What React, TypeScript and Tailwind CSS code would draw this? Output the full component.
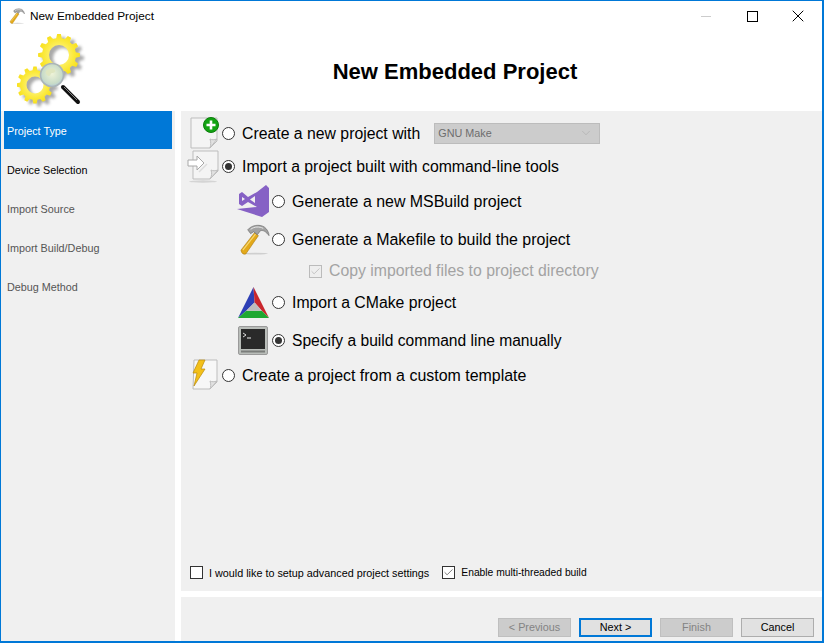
import { Check, ChevronDown, X } from "lucide-react";
import type { ReactNode } from "react";

const sansFont = { fontFamily: '"Liberation Sans", Arial, sans-serif' };

function gearPath(cx: number, cy: number, rIn: number, rOut: number, teeth: number, hole: number) {
  let d = "";
  const step = (Math.PI * 2) / teeth;
  for (let i = 0; i < teeth; i++) {
    const a = i * step;
    const pts: [number, number][] = [
      [rIn, a - step * 0.32],
      [rOut, a - step * 0.17],
      [rOut, a + step * 0.17],
      [rIn, a + step * 0.32],
    ];
    pts.forEach(([r, t], j) => {
      const x = (cx + r * Math.cos(t)).toFixed(2);
      const y = (cy + r * Math.sin(t)).toFixed(2);
      d += `${i === 0 && j === 0 ? "M" : "L"}${x} ${y} `;
    });
  }
  d += `Z M${cx + hole} ${cy} A${hole} ${hole} 0 1 0 ${cx - hole} ${cy} A${hole} ${hole} 0 1 0 ${cx + hole} ${cy} Z`;
  return d;
}

function GearsLogo() {
  const big = gearPath(42, 21, 17, 21, 12, 10);
  const small = gearPath(18, 51, 15, 18.5, 12, 8.5);
  return (
    <svg width="76" height="76" viewBox="0 0 76 76">
      <defs>
        <radialGradient id="gearFill" cx="50%" cy="50%" r="60%">
          <stop offset="0%" stopColor="#fff9a8" />
          <stop offset="60%" stopColor="#fbe93a" />
          <stop offset="100%" stopColor="#f5d90a" />
        </radialGradient>
        <radialGradient id="lens" cx="50%" cy="45%" r="60%">
          <stop offset="0%" stopColor="#eef3d8" />
          <stop offset="70%" stopColor="#c9dcc8" />
          <stop offset="100%" stopColor="#a9c6dc" />
        </radialGradient>
        <filter id="blur1" x="-20%" y="-20%" width="150%" height="150%">
          <feGaussianBlur stdDeviation="1.6" />
        </filter>
      </defs>
      <g opacity="0.5" filter="url(#blur1)" transform="translate(4 3)">
        <path d={big} fill="#555" fillRule="evenodd" />
        <path d={small} fill="#555" fillRule="evenodd" />
      </g>
      <path d={big} fill="url(#gearFill)" fillRule="evenodd" />
      <path d={small} fill="url(#gearFill)" fillRule="evenodd" />
      <line x1="46" y1="53" x2="61" y2="68" stroke="#111" strokeWidth="4" strokeLinecap="round" />
      <line x1="47" y1="53" x2="60" y2="66" stroke="#888" strokeWidth="1" />
      <circle cx="35" cy="41" r="11.5" fill="url(#lens)" stroke="#aab4b8" strokeWidth="1.6" />
      <path d="M29 37c3-3 7-3 9-1 1 2-1 3-3 3s-1 3-3 3-4-3-3-5z" fill="#dfe6c0" />
    </svg>
  );
}

function HammerIcon({ size }: { size: number }) {
  return (
    <svg width={size} height={size} viewBox="0 0 30 32">
      <ellipse cx="16" cy="30.5" rx="13" ry="0.9" fill="#cfcfcf" />
      <path d="M1 27 L15 9 L19 12 L6 31 Q2 32 1 27 Z" fill="#e3a91a" stroke="#a9760b" strokeWidth="0.6" />
      <path d="M3 27 L16 10.5" stroke="#f6d873" strokeWidth="1.2" />
      <path d="M8 6 C12 1 20 0 25 3 C28 5 30 9 30 12 C27 8 24 6 21 7 L18 11 L14 8 L11 10 Z" fill="#a2a2a2" stroke="#5d5d5d" strokeWidth="0.6" />
      <path d="M11 5.5 C15 2.5 20 2.5 24 4.5" fill="none" stroke="#e8e8e8" strokeWidth="1" />
    </svg>
  );
}

function PageIcon({ children }: { children?: ReactNode }) {
  return (
    <svg width="28" height="32" viewBox="0 0 28 32" overflow="visible">
      <path d="M1 1 H27 V24 L20 31 H1 Z" fill="#f4f4f4" stroke="#bdbdbd" />
      <path d="M27 22 C24 23 22 23 20 22 C21 25 21 28 20 31 Z" fill="#e2e2e2" stroke="#bdbdbd" />
      {children}
    </svg>
  );
}

function NewPageIcon() {
  return (
    <PageIcon>
      <circle cx="21" cy="8" r="7.5" fill="#12a312" stroke="#0b7d0b" />
      <path d="M21 3.5 V12.5 M16.5 8 H25.5" stroke="#fff" strokeWidth="2.6" />
    </PageIcon>
  );
}

function ImportIcon() {
  return (
    <svg width="32" height="33" viewBox="0 0 32 33" className="-ml-[2px]">
      <path d="M6 1 H31 V21 L23 29 H6 Z" fill="#f4f4f4" stroke="#bdbdbd" />
      <path d="M31 20 C28 21 26 21 24 20 C25 23 25 26 23 29 Z" fill="#e2e2e2" stroke="#bdbdbd" />
      <path d="M1 10 H10 V6 L17 13 L10 20 V16 H1 Z" fill="#fff" stroke="#a8a8a8" />
      <path d="M12 22 L20 14" stroke="#dcdcdc" strokeWidth="1.5" />
      <ellipse cx="16" cy="31.5" rx="14" ry="1.2" fill="#d4d4d4" />
    </svg>
  );
}

function VsIcon() {
  return (
    <svg width="33" height="33" viewBox="0 0 33 33" className="-ml-[2px]">
      <path d="M20 7 L29 0 L32 3 V27 L25 32 L0 24 L20 22 Z" fill="#8661c5" />
      <path d="M2 9 L5 7 L11 12 L20 7 V22 L11 17 L5 21 L2 19 Z M5 12 V16 L8 14 Z M13 14.5 L18 18 V11 Z" fill="#8661c5" fillRule="evenodd" />
    </svg>
  );
}

function CmakeIcon() {
  return (
    <svg width="31" height="31" viewBox="0 0 30 30" className="-ml-[2px]">
      <path d="M15 0 L16 15 L8 23 L0 30 Z" fill="#2d3fb5" />
      <path d="M15 0 L30 30 L23 23 L16 15 Z" fill="#c9262c" />
      <path d="M0 30 L8 23 L23 23 L30 30 Z" fill="#1fa832" />
      <path d="M16 15 L23 23 L8 23 Z" fill="#bdbdbd" />
    </svg>
  );
}

function TerminalIcon() {
  return (
    <svg width="30" height="29" viewBox="0 0 30 29" className="-ml-[2px]">
      <rect x="0.5" y="0.5" width="29" height="28" rx="1.5" fill="#b9bdb9" stroke="#9a9a9a" />
      <rect x="3" y="3" width="24" height="20" fill="#2a2a2a" />
      <path d="M5 7 L8 9 L5 11" fill="none" stroke="#eee" strokeWidth="0.9" />
      <path d="M9 12 H13" stroke="#eee" strokeWidth="1" />
      <rect x="3" y="24.5" width="24" height="2" fill="#7a7d7a" />
    </svg>
  );
}

function TemplateIcon() {
  return (
    <svg width="27" height="32" viewBox="0 0 27 32">
      <path d="M3 1 H26 V23 L19 30 H2 Z" fill="#f7f7f7" stroke="#bdbdbd" />
      <path d="M26 22 C23 23 21 23 19 22 C20 25 20 28 19 30 Z" fill="#e2e2e2" stroke="#bdbdbd" />
      <path d="M8 1 H14 L10 10 H14 L3 27 L6 14 H2 Z" fill="#f3c019" stroke="#b98a0c" strokeWidth="0.7" />
    </svg>
  );
}

function Radio({ checked }: { checked?: boolean }) {
  return (
    <span className="flex h-[13px] w-[13px] shrink-0 items-center justify-center rounded-full border border-[#333] bg-white">
      {checked && <span className="h-[7px] w-[7px] rounded-full bg-[#333]" />}
    </span>
  );
}

function Box({ checked, disabled }: { checked?: boolean; disabled?: boolean }) {
  return (
    <span className={`flex h-[13px] w-[13px] shrink-0 items-center justify-center border ${disabled ? "border-[#bbb] bg-[#eee]" : "border-[#333] bg-white"}`}>
      {checked && <Check size={11} strokeWidth={1.4} className={disabled ? "text-[#aaa]" : "text-[#333]"} />}
    </span>
  );
}

function OptionRow({ icon, label, checked, heightClass, sub, labelClass = "text-[15.8px]", children }: {
  icon: ReactNode;
  label: string;
  checked?: boolean;
  heightClass: string;
  sub?: boolean;
  labelClass?: string;
  children?: ReactNode;
}) {
  return (
    <div className={`flex items-center ${heightClass} ${sub ? "pl-[55px]" : "pl-[5px]"}`}>
      <div className="flex h-full w-[36px] shrink-0 items-center justify-center">{icon}</div>
      <Radio checked={checked} />
      <span className={`ml-[7px] pt-[2px] text-black ${labelClass}`}>{label}</span>
      {children}
    </div>
  );
}

function WizardButton({ label, disabled, focused }: { label: string; disabled?: boolean; focused?: boolean }) {
  let tone = "border border-[#adadad] bg-[#e1e1e1] text-black";
  if (disabled) tone = "border border-[#bfbfbf] bg-[#cccccc] text-[#838383]";
  if (focused) tone = "border-2 border-[#0078d7] bg-[#e1e1e1] text-black";
  return (
    <button className={`flex h-[19px] w-[73px] items-center justify-center text-[10.8px] ${tone}`}>{label}</button>
  );
}

const steps = ["Project Type", "Device Selection", "Import Source", "Import Build/Debug", "Debug Method"];

export default function App() {
  return (
    <div className="flex h-[643px] w-[824px] flex-col overflow-hidden border-t border-r-2 border-b-2 border-l border-[#0078d7] bg-white" style={sansFont}>
      {/* title bar */}
      <div className="flex h-[30px] shrink-0 items-center pl-[8px] pr-[1px]">
        <HammerIcon size={16} />
        <span className="ml-[5px] pt-[1px] text-[11.8px] text-black">New Embedded Project</span>
        <div className="ml-auto flex">
          <div className="flex h-[30px] w-[46px] items-center justify-center"><div className="h-px w-[10px] bg-[#cccccc]" /></div>
          <div className="flex h-[30px] w-[46px] items-center justify-center"><div className="h-[11px] w-[11px] border border-black" /></div>
          <div className="flex h-[30px] w-[46px] items-center justify-center text-black"><X size={20} strokeWidth={1.2} /></div>
        </div>
      </div>

      {/* header */}
      <div className="flex h-[80px] shrink-0 items-center">
        <div className="w-[180px] self-start pl-[16px] pt-[3px]">
          <GearsLogo />
        </div>
        <h1 className="w-[548px] pt-[1px] text-center text-[22px] font-bold text-black">New Embedded Project</h1>
      </div>

      <div className="flex min-h-0 flex-1">
        {/* steps */}
        <div className="flex w-[174px] shrink-0 flex-col bg-[#f0f0f0] px-[3px] text-[10.8px]">
          {steps.map((step, i) => (
            <div
              key={step}
              className={`mb-[1px] flex h-[38px] items-center pl-[3px] pt-[3px] ${i === 0 ? "bg-[#0078d7] text-white" : i === 1 ? "text-black" : "text-[#555]"}`}
            >
              {step}
            </div>
          ))}
        </div>

        <div className="ml-[6px] flex min-w-0 flex-1 flex-col gap-[6px]">
          {/* options */}
          <div className="flex flex-1 flex-col bg-[#f0f0f0] pt-[6px]">
            <OptionRow icon={<NewPageIcon />} label="Create a new project with" heightClass="h-[32px]">
              <div className="ml-[14px] flex h-[21px] w-[166px] items-center justify-between border border-[#bcbcbc] bg-[#cccccc] pl-[3px] pr-[6px] text-[10.8px] text-[#6d6d6d]">
                GNU Make
                <ChevronDown size={14} strokeWidth={1} className="text-[#a8a8a8]" />
              </div>
            </OptionRow>
            <OptionRow icon={<ImportIcon />} label="Import a project built with command-line tools" checked heightClass="h-[34px]" />
            <OptionRow sub icon={<VsIcon />} label="Generate a new MSBuild project" heightClass="h-[36px]" labelClass="text-[15.95px]" />
            <OptionRow sub icon={<HammerIcon size={31} />} label="Generate a Makefile to build the project" heightClass="h-[40px]" labelClass="text-[15.95px]" />
            <div className="flex h-[24px] items-center pl-[128px]">
              <Box checked disabled />
              <span className="ml-[7px] text-[15.8px] text-[#a3a3a3]">Copy imported files to project directory</span>
            </div>
            <OptionRow sub icon={<CmakeIcon />} label="Import a CMake project" heightClass="h-[38px]" />
            <OptionRow sub icon={<TerminalIcon />} label="Specify a build command line manually" checked heightClass="h-[38px]" labelClass="text-[15.6px]" />
            <OptionRow icon={<TemplateIcon />} label="Create a project from a custom template" heightClass="h-[32px]" labelClass="text-[15.95px]" />

            <div className="mt-auto flex items-center pb-[10px] pl-[9px] text-[10.8px] text-black">
              <Box />
              <span className="ml-[6px]">I would like to setup advanced project settings</span>
              <span className="ml-[13px]"><Box checked /></span>
              <span className="ml-[6px] text-[10.3px]">Enable multi-threaded build</span>
            </div>
          </div>

          {/* footer */}
          <div className="flex h-[44px] shrink-0 items-end justify-end gap-[8px] bg-[#f0f0f0] pb-[4px] pr-[8px]">
            <WizardButton label="< Previous" disabled />
            <WizardButton label="Next >" focused />
            <WizardButton label="Finish" disabled />
            <WizardButton label="Cancel" />
          </div>
        </div>
      </div>
    </div>
  );
}
